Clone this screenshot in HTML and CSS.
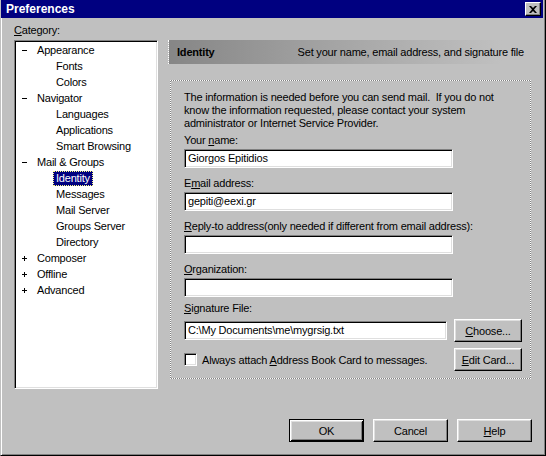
FILE: index.html
```html
<!DOCTYPE html>
<html lang="en">
<head>
    <meta charset="UTF-8">
    <title>Preferences</title>
    <link rel="stylesheet" href="styles.css">
</head>
<body>
    <div class="window">
        <div class="titlebar">
            <span class="title">Preferences</span>
            <span class="close-btn">
                <svg width="8" height="7" viewBox="0 0 8 7">
                    <path d="M0 0h2l2 2 2-2h2L5 3.5 8 7H6L4 5 2 7H0l3-3.5z" fill="#000"/>
                </svg>
            </span>
        </div>

        <div class="content">
            <div class="left-col">
                <div class="cat-label"><u>C</u>ategory:</div>
                <div class="tree">
                    <div class="tree-row parent"><span class="toggle minus"></span>Appearance</div>
                    <div class="tree-row child">Fonts</div>
                    <div class="tree-row child">Colors</div>
                    <div class="tree-row parent"><span class="toggle minus"></span>Navigator</div>
                    <div class="tree-row child">Languages</div>
                    <div class="tree-row child">Applications</div>
                    <div class="tree-row child">Smart Browsing</div>
                    <div class="tree-row parent"><span class="toggle minus"></span>Mail &amp; Groups</div>
                    <div class="tree-row child"><span class="selected">Identity</span></div>
                    <div class="tree-row child">Messages</div>
                    <div class="tree-row child">Mail Server</div>
                    <div class="tree-row child">Groups Server</div>
                    <div class="tree-row child">Directory</div>
                    <div class="tree-row parent"><span class="toggle plus"></span>Composer</div>
                    <div class="tree-row parent"><span class="toggle plus"></span>Offline</div>
                    <div class="tree-row parent"><span class="toggle plus"></span>Advanced</div>
                </div>
            </div>

            <div class="right-col">
                <div class="pane-header">
                    <span class="pane-title">Identity</span>
                    <span class="pane-desc">Set your name, email address, and signature file</span>
                </div>

                <div class="group">
                    <p class="intro">The information is needed before you can send mail.&nbsp; If you do not know the information requested, please contact your system administrator or Internet Service Provider.</p>

                    <label class="field-label">Your <u>n</u>ame:</label>
                    <div class="textbox">Giorgos Epitidios</div>

                    <label class="field-label">E<u>m</u>ail address:</label>
                    <div class="textbox">gepiti@eexi.gr</div>

                    <label class="field-label"><u>R</u>eply-to address(only needed if different from email address):</label>
                    <div class="textbox"></div>

                    <label class="field-label"><u>O</u>rganization:</label>
                    <div class="textbox"></div>

                    <label class="field-label sig-label"><u>S</u>ignature File:</label>
                    <div class="sig-row">
                        <div class="textbox sig-box">C:\My Documents\me\mygrsig.txt</div>
                        <span class="btn side-btn"><u>C</u>hoose...</span>
                    </div>

                    <div class="check-row">
                        <span class="checkbox"></span>
                        <span class="check-text">Always attach <u>A</u>ddress Book Card to messages.</span>
                        <span class="btn side-btn"><u>E</u>dit Card...</span>
                    </div>
                </div>
            </div>
        </div>

        <div class="buttons">
            <span class="btn dlg-btn default">OK</span>
            <span class="btn dlg-btn">Cancel</span>
            <span class="btn dlg-btn"><u>H</u>elp</span>
        </div>
    </div>
</body>
</html>
```

FILE: styles.css
```css
body {
    margin: 0;
    font-family: 'Liberation Sans', Arial, sans-serif;
    font-size: 11px;
    letter-spacing: -0.2px;
    color: #000;
    background: #c0c0c0;
}

.window {
    width: 546px;
    height: 456px;
    box-sizing: border-box;
    background: #c0c0c0;
    border-left: 1px solid #c0c0c0;
    border-right: 1px solid #000;
    border-bottom: 1px solid #000;
    box-shadow: inset 1px 0 #fff, inset -1px -1px #808080;
}

/* Title bar */
.titlebar {
    height: 18px;
    margin-right: 2px;
    background: #000080;
    display: flex;
    align-items: center;
    justify-content: space-between;
    padding: 0 2px 0 5px;
}

.title {
    color: #fff;
    font-weight: bold;
    font-size: 12px;
    letter-spacing: 0;
}

.close-btn {
    width: 16px;
    height: 14px;
    box-sizing: border-box;
    background: #c0c0c0;
    border: 1px solid;
    border-color: #fff #000 #000 #fff;
    box-shadow: inset -1px -1px #808080;
    display: flex;
    align-items: center;
    justify-content: center;
}

/* Main area */
.content {
    display: flex;
    height: 365px;
    padding: 6px 0 0 13px;
}

.left-col {
    width: 144px;
}

.cat-label {
    line-height: 13px;
    margin-bottom: 3px;
}

.tree {
    height: 349px;
    box-sizing: border-box;
    background: #fff;
    border: 1px solid;
    border-color: #808080 #fff #fff #808080;
    box-shadow: inset 1px 1px #000, inset -1px -1px #dfdfdf;
    padding-top: 1px;
}

.tree-row {
    height: 16px;
    line-height: 16px;
    white-space: nowrap;
    display: flex;
    align-items: center;
}

.tree-row.parent {
    padding-left: 7px;
}

.tree-row.child {
    padding-left: 41px;
}

.toggle {
    width: 5px;
    height: 7px;
    margin-right: 10px;
    position: relative;
    background-image: radial-gradient(circle, #808080 0.5px, transparent 0.6px);
    background-size: 2px 2px;
}

.toggle::before {
    content: '';
    position: absolute;
    left: 0;
    top: 3px;
    width: 5px;
    height: 1px;
    background: #000;
}

.toggle.plus::after {
    content: '';
    position: absolute;
    left: 2px;
    top: 1px;
    width: 1px;
    height: 5px;
    background: #000;
}

.selected {
    background: #000080;
    color: #fff;
    line-height: 13px;
    padding: 0 2px;
    margin-left: -3px;
    border: 1px dotted #ffff80;
}

/* Right side */
.right-col {
    margin-left: 10px;
    padding-top: 16px;
}

.pane-header {
    width: 363px;
    height: 24px;
    box-sizing: border-box;
    display: flex;
    align-items: center;
    justify-content: space-between;
    padding: 0 7px 0 8px;
    background: linear-gradient(to right, #868686 0%, #a4a4a4 45%, #c0c0c0 92%);
    border-left: 1px dotted #fff;
}

.pane-title {
    font-weight: bold;
}

.group {
    width: 361px;
    height: 299px;
    box-sizing: border-box;
    margin: 16px 0 0 2px;
    padding: 10px 0 0 13px;
    border: 1px dotted #fff;
    background: linear-gradient(#c0c0c0, #c0c0c0) padding-box, #808080 border-box;
}

.intro {
    margin: 0;
    width: 318px;
    line-height: 13px;
}

.field-label {
    display: block;
    line-height: 13px;
    margin-top: 9px;
}

.intro + .field-label {
    margin-top: 4px;
}

.textbox {
    width: 269px;
    height: 19px;
    box-sizing: border-box;
    margin-top: 2px;
    background: #fff;
    border: 1px solid;
    border-color: #808080 #fff #fff #808080;
    box-shadow: inset 1px 1px #000, inset -1px -1px #dfdfdf;
    padding: 0 3px;
    line-height: 17px;
    white-space: nowrap;
}

.field-label.sig-label {
    margin-top: 5px;
}

.sig-row {
    display: flex;
    align-items: center;
    margin-top: 4px;
    height: 23px;
}

.sig-row .sig-box {
    width: 263px;
    margin-top: 0;
    margin-right: 7px;
}

.check-row {
    display: flex;
    align-items: center;
    margin-top: 6px;
    height: 23px;
}

.checkbox {
    width: 13px;
    height: 13px;
    box-sizing: border-box;
    background: #fff;
    border: 1px solid;
    border-color: #808080 #fff #fff #808080;
    box-shadow: inset 1px 1px #000, inset -1px -1px #dfdfdf;
    margin-right: 5px;
}

.check-text {
    width: 252px;
}

/* Buttons */
.btn {
    box-sizing: border-box;
    display: flex;
    align-items: center;
    justify-content: center;
    height: 23px;
    background: #c0c0c0;
    border: 1px solid;
    border-color: #fff #000 #000 #fff;
    box-shadow: inset -1px -1px #808080, inset 1px 1px #dfdfdf;
}

.side-btn {
    width: 68px;
}

.buttons {
    display: flex;
    justify-content: flex-end;
    margin-top: 30px;
    padding-right: 13px;
}

.dlg-btn {
    width: 75px;
    margin-left: 9px;
}

.dlg-btn.default {
    border: 1px solid #000;
    box-shadow: inset 1px 1px #fff, inset -1px -1px #000, inset 2px 2px #dfdfdf, inset -2px -2px #808080;
}
```
